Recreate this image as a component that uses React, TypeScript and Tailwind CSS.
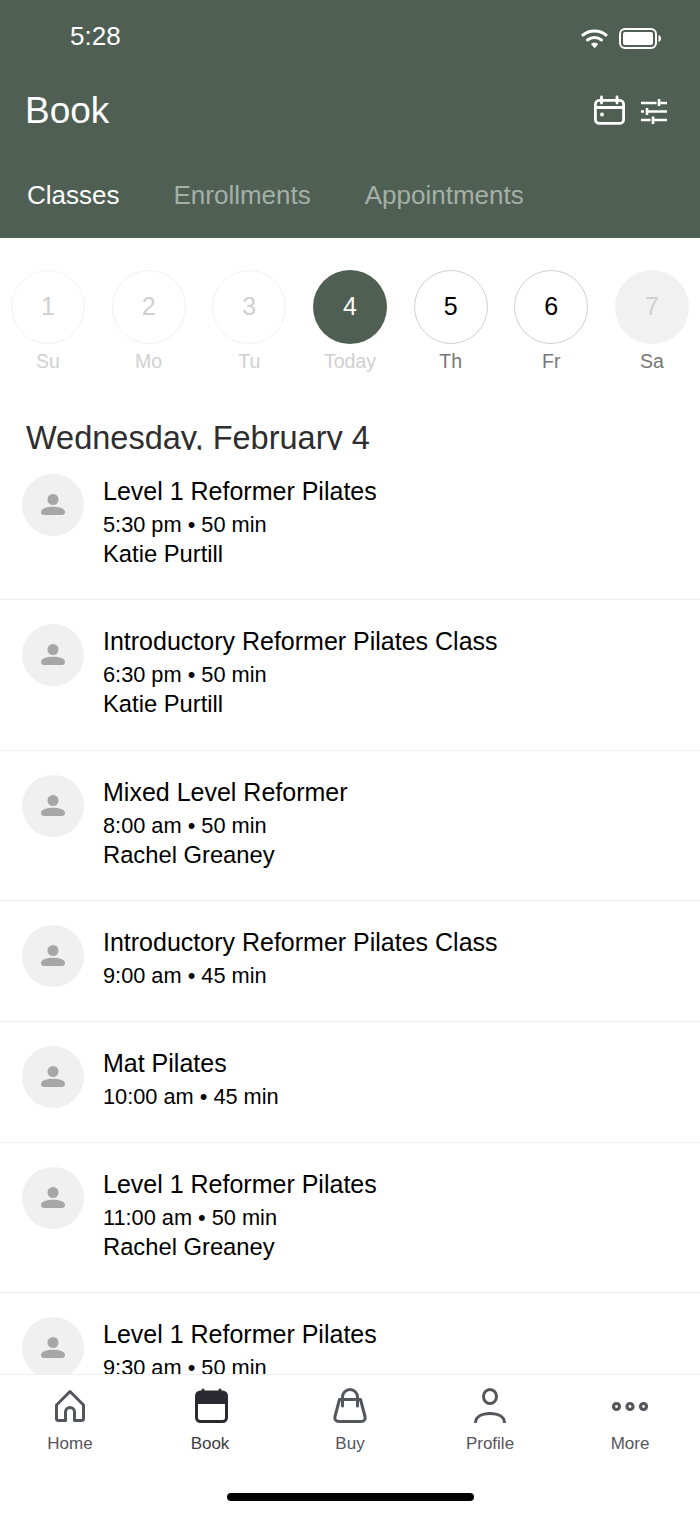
const days = [
  { num: '1', label: 'Su', circle: 'border border-[#f2f2f2] text-[#d0d0d0]', text: 'text-[#d0d0d0]' },
  { num: '2', label: 'Mo', circle: 'border border-[#f2f2f2] text-[#d0d0d0]', text: 'text-[#d0d0d0]' },
  { num: '3', label: 'Tu', circle: 'border border-[#f2f2f2] text-[#d0d0d0]', text: 'text-[#d0d0d0]' },
  { num: '4', label: 'Today', circle: 'bg-[#505f54] text-white', text: 'text-[#d0d0d0]' },
  { num: '5', label: 'Th', circle: 'border border-[#d0d0d0] text-black', text: 'text-[#777777]' },
  { num: '6', label: 'Fr', circle: 'border border-[#d0d0d0] text-black', text: 'text-[#777777]' },
  { num: '7', label: 'Sa', circle: 'bg-[#f1f1f1] text-[#d0d0d0]', text: 'text-[#777777]' },
]

const classes = [
  { title: 'Level 1 Reformer Pilates', time: '5:30 pm • 50 min', teacher: 'Katie Purtill', height: 'h-[150px]' },
  { title: 'Introductory Reformer Pilates Class', time: '6:30 pm • 50 min', teacher: 'Katie Purtill', height: 'h-[151px]' },
  { title: 'Mixed Level Reformer', time: '8:00 am • 50 min', teacher: 'Rachel Greaney', height: 'h-[150px]' },
  { title: 'Introductory Reformer Pilates Class', time: '9:00 am • 45 min', height: 'h-[121px]' },
  { title: 'Mat Pilates', time: '10:00 am • 45 min', height: 'h-[121px]' },
  { title: 'Level 1 Reformer Pilates', time: '11:00 am • 50 min', teacher: 'Rachel Greaney', height: 'h-[150px]' },
  { title: 'Level 1 Reformer Pilates', time: '9:30 am • 50 min', teacher: 'Rachel Greaney', height: 'h-[150px]' },
]

function Avatar() {
  return (
    <div className="w-[62px] h-[62px] rounded-full bg-[#f0f0f0] flex items-center justify-center shrink-0">
      <svg width="26" height="26" viewBox="0 0 26 26" fill="#a6a6a6">
        <circle cx="13" cy="7.500" r="5.500" />
        <path d="M1 20c0-3.600 6-5.200 12-5.200S25 16.400 25 20c0 2-1.200 3-3 3H4c-1.800 0-3-1-3-3z" />
      </svg>
    </div>
  )
}

function NavItem({ label, active, children }: { label: string; active?: boolean; children: React.ReactNode }) {
  return (
    <div className="w-[140px] flex flex-col items-center">
      <div className="h-[38px] flex items-center justify-center">{children}</div>
      <span className={`text-[17px] leading-[20px] mt-[8px] ${active ? 'text-[#3c3c43]' : 'text-[#55555c]'}`}>{label}</span>
    </div>
  )
}

export default function App() {
  return (
    <div className="w-[700px] h-[1514px] bg-white flex flex-col overflow-hidden font-['Liberation_Sans',sans-serif]">
      {/* Header */}
      <div className="h-[238px] bg-[#505f54] text-white shrink-0 flex flex-col">
        <div className="h-[72px] pl-[70px] pr-[39px] flex items-center justify-between">
          <span className="text-[26px] leading-none">5:28</span>
          <div className="flex items-center gap-[11px] mt-[4px]">
            <svg width="27" height="21" viewBox="0 0 27 21" fill="none" stroke="white" strokeWidth="3" strokeLinecap="round">
              <path d="M2 7C8.500 1.500 18.500 1.500 25 7" />
              <path d="M6.500 12C10.500 8.800 16.500 8.800 20.500 12" />
              <path d="M13.500 19.500l-3-3.500c1.800-1.300 4.200-1.300 6 0z" fill="white" strokeWidth="1" strokeLinejoin="round" />
            </svg>
            <svg width="42" height="21" viewBox="0 0 42 21" fill="none">
              <rect x="1" y="1" width="36" height="19" rx="5" stroke="white" strokeWidth="2" />
              <rect x="4" y="4" width="30" height="13" rx="2" fill="white" />
              <path d="M39.500 7c1.500.5 2.500 1.800 2.500 3.500s-1 3-2.500 3.500z" fill="white" />
            </svg>
          </div>
        </div>
        <div className="h-[78px] pl-[25px] pr-[32px] flex items-center justify-between">
          <h1 className="text-[37px] leading-none font-normal mb-[2px]">Book</h1>
          <div className="flex items-center gap-[14px]">
            <svg width="33" height="32" viewBox="0 0 33 32" fill="none" stroke="white" strokeWidth="2.800" strokeLinecap="round">
              <rect x="2.400" y="5.400" width="28.200" height="23" rx="4" />
              <path d="M2.400 12.500h28.200M8.500 2v6M24 2v6" />
              <circle cx="9" cy="19.500" r="2" fill="white" stroke="none" />
            </svg>
            <svg width="28" height="32" viewBox="0 0 28 32" fill="none" stroke="white" strokeWidth="2.600">
              <path d="M1 8h15.500M19 8h8M19 4v7M1 16.500h3M7 16.500h20M7 13v7M1 25h9.500M13 25h14M13 21.500v7.500" />
            </svg>
          </div>
        </div>
        <div className="pl-[27px] flex items-center gap-[54px] mt-[29px] text-[26px] leading-[32px]">
          <span>Classes</span>
          <span className="text-[#a5afa8]">Enrollments</span>
          <span className="text-[#a5afa8]">Appointments</span>
        </div>
      </div>

      {/* Week strip */}
      <div className="pt-[32px] px-[11px] flex justify-between shrink-0">
        {days.map((d) => (
          <div key={d.num} className="w-[74px] flex flex-col items-center">
            <div className={`w-[74px] h-[74px] rounded-full flex items-center justify-center text-[25px] ${d.circle}`}>{d.num}</div>
            <span className={`text-[19.500px] leading-[24px] mt-[5px] ${d.text}`}>{d.label}</span>
          </div>
        ))}
      </div>

      <div className="h-[57px] mt-[20px] pl-[26px] shrink-0 overflow-hidden">
        <h2 className="text-[32.500px] leading-[40px] mt-[25px] text-[#2e2e2e] font-normal">Wednesday, February 4</h2>
      </div>

      {/* Class list */}
      <div className="flex-1 overflow-hidden">
        {classes.map((c, i) => (
          <div key={i} className={`flex items-start gap-[19px] pl-[22px] pt-[24px] border-b border-[#f0f0f0] ${c.height}`}>
            <Avatar />
            <div className="flex flex-col text-black">
              <span className="text-[25px] leading-[36px] mt-[-1px]">{c.title}</span>
              <span className="text-[21.750px] leading-[30px] mt-[1px]">{c.time}</span>
              {c.teacher && <span className="text-[23.750px] leading-[28px]">{c.teacher}</span>}
            </div>
          </div>
        ))}
      </div>

      {/* Bottom nav */}
      <div className="h-[140px] border-t border-[#eeeeee] bg-white shrink-0 flex flex-col">
        <div className="flex pt-[13px]">
          <NavItem label="Home">
            <svg width="40" height="38" viewBox="0 0 40 38" fill="none" stroke="#55555c" strokeWidth="3" strokeLinejoin="round">
              <path d="M6.500 17L20 3.500 33.500 17v13.500a2 2 0 0 1-2 2h-7V24a4.500 4.500 0 0 0-9 0v8.500h-7a2 2 0 0 1-2-2z" />
            </svg>
          </NavItem>
          <NavItem label="Book" active>
            <svg width="40" height="38" viewBox="0 0 40 38" fill="none">
              <path d="M13 2v4M30 2v4" stroke="#2a2a30" strokeWidth="3" strokeLinecap="round" />
              <rect x="6.500" y="4" width="30" height="29.500" rx="4" stroke="#2a2a30" strokeWidth="3" />
              <path d="M6.500 7.500a4 4 0 0 1 4-4h22a4 4 0 0 1 4 4V16h-30z" fill="#2a2a30" />
            </svg>
          </NavItem>
          <NavItem label="Buy">
            <svg width="40" height="38" viewBox="0 0 40 38" fill="none" stroke="#55555c" strokeWidth="3" strokeLinecap="round" strokeLinejoin="round">
              <path d="M9.500 11.500h21L35 28.500c.8 3-1 5-4 5H9c-3 0-4.800-2-4-5z" />
              <path d="M12.500 18V9a7.500 7.500 0 0 1 15 0v9" />
            </svg>
          </NavItem>
          <NavItem label="Profile">
            <svg width="40" height="38" viewBox="0 0 40 38" fill="none" stroke="#55555c" strokeWidth="3">
              <ellipse cx="20" cy="8.500" rx="6.500" ry="7" />
              <path d="M5.500 35C5.500 28.500 12 25.500 20 25.500S34.500 28.500 34.500 35" />
            </svg>
          </NavItem>
          <NavItem label="More">
            <svg width="40" height="38" viewBox="0 0 40 38" fill="none" stroke="#55555c" strokeWidth="3.200">
              <circle cx="6.500" cy="18.500" r="3" />
              <circle cx="20" cy="18.500" r="3" />
              <circle cx="33.500" cy="18.500" r="3" />
            </svg>
          </NavItem>
        </div>
        <div className="flex justify-center mt-[39px]">
          <div className="w-[247px] h-[8px] rounded-full bg-black" />
        </div>
      </div>
    </div>
  )
}
